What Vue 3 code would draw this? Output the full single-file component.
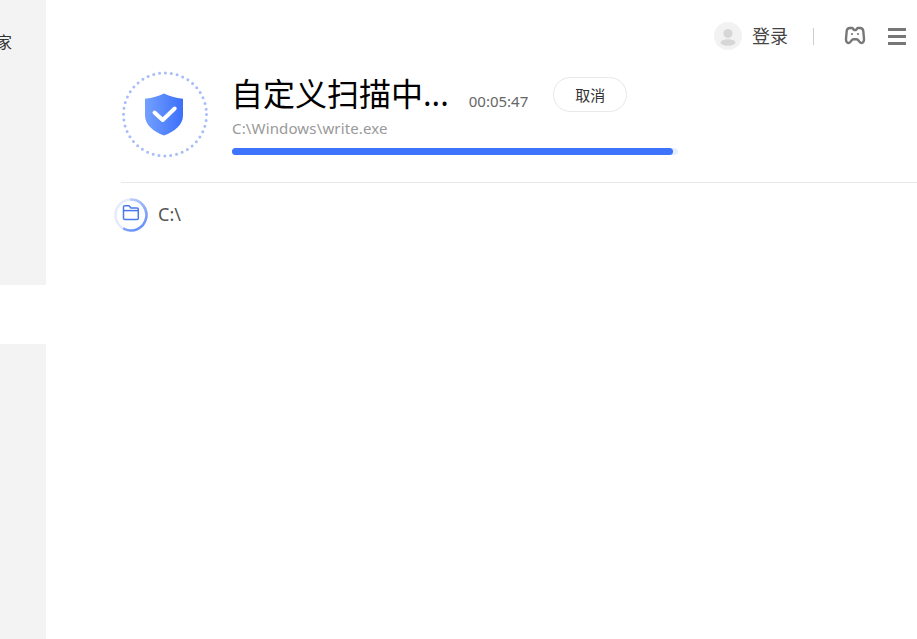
<script setup>
const title = '自定义扫描中...'
const elapsed = '00:05:47'
const currentFile = 'C:\\Windows\\write.exe'
const progress = 98.9
const scanRoot = 'C:\\'
</script>

<template>
  <div class="page">
    <aside class="sidebar">
      <div class="nav-label">家</div>
      <div class="nav-active"></div>
    </aside>

    <main class="main">
      <header class="topbar">
        <span class="avatar">
          <svg width="28" height="28" viewBox="0 0 28 28">
            <circle cx="14" cy="11.500" r="4.500" fill="#d6d6d6" />
            <ellipse cx="14" cy="20.500" rx="7.500" ry="3.200" fill="#d6d6d6" />
          </svg>
        </span>
        <span class="login">登录</span>
        <span class="divider"></span>
        <svg class="game" width="22" height="20" viewBox="0 0 22 20" fill="none">
          <path d="M6 2H8.500L10 4H12L13.500 2H16C18 2 19 3 19.300 5L20 13C20.200 15.500 19 17 17.500 17C16 17 15.500 16 14.500 14.500C14 13.700 13.500 13.200 12.500 13.200H9.500C8.500 13.200 8 13.700 7.500 14.500C6.500 16 6 17 4.500 17C3 17 1.800 15.500 2 13L2.700 5C3 3 4 2 6 2Z" stroke="#777" stroke-width="2.400" stroke-linejoin="round" />
          <circle cx="8" cy="8" r="1.100" fill="#777" />
          <circle cx="14" cy="8" r="1.100" fill="#777" />
        </svg>
        <span class="menu"><i></i><i></i><i></i></span>
      </header>

      <section class="scan">
        <svg class="badge" width="88" height="88" viewBox="0 0 88 88" fill="none">
          <defs>
            <linearGradient id="shieldFill" x1="0" y1="0" x2="1" y2="0">
              <stop offset="0" stop-color="#73a0ff" />
              <stop offset="1" stop-color="#3c6ffb" />
            </linearGradient>
          </defs>
          <circle cx="44" cy="43.500" r="41.500" stroke="#a6bdf8" stroke-width="3" stroke-linecap="round" stroke-dasharray="0 5.930" />
          <path d="M43 22.500c5 2.600 11.500 4.300 19 5.300v16.700c0 9.500-8.500 16-19 20-10.500-4-19-10.500-19-20V27.800c7.500-1 14-2.700 19-5.300Z" fill="url(#shieldFill)" />
          <path d="M33.500 41.500l8.200 7.500 12-11.500" stroke="#fff" stroke-width="4" stroke-linecap="round" stroke-linejoin="round" />
        </svg>

        <div class="scan-info">
          <div class="scan-head">
            <h1 class="title">{{ title }}</h1>
            <span class="time">{{ elapsed }}</span>
            <button class="cancel">取消</button>
          </div>
          <div class="path">{{ currentFile }}</div>
          <div class="track">
            <div class="fill" :style="{ width: progress + '%' }"></div>
          </div>
        </div>
      </section>

      <div class="rule"></div>

      <div class="scan-item">
        <svg class="spinner" width="36" height="36" viewBox="0 0 36 36" fill="none">
          <defs>
            <linearGradient id="ringFill" gradientUnits="userSpaceOnUse" x1="8" y1="4" x2="28" y2="30">
              <stop offset="0" stop-color="#c6d6fc" />
              <stop offset="1" stop-color="#6a92f8" />
            </linearGradient>
          </defs>
          <circle cx="18" cy="18" r="15.500" stroke="#e3ebfd" stroke-width="2.500" />
          <path d="M18 2.500A15.500 15.500 0 1 1 11.100 31.900" stroke="url(#ringFill)" stroke-width="2.500" stroke-linecap="round" />
          <path d="M10.500 10c0-.8.600-1.300 1.400-1.300h4.200l1.800 2.300h6.100c.8 0 1.300.6 1.300 1.300v9c0 .8-.5 1.300-1.300 1.300h-12.100c-.8 0-1.400-.5-1.400-1.300Z" stroke="#4a78ee" stroke-width="1.500" stroke-linejoin="round" />
          <path d="M10.500 13.600h15.300" stroke="#4a78ee" stroke-width="1.500" />
        </svg>
        <span class="item-name">{{ scanRoot }}</span>
      </div>
    </main>
  </div>
</template>

<style>
html, body {
  margin: 0;
  background: #fff;
}
</style>

<style scoped>
.page {
  display: flex;
  width: 917px;
  height: 639px;
  overflow: hidden;
  background: #fff;
  font-family: "Noto Sans", "Noto Sans CJK SC", sans-serif;
}

.sidebar {
  flex: 0 0 46px;
  display: flex;
  flex-direction: column;
  background: #f3f3f3;
}

.nav-label {
  margin: 30px 0 0 -4px;
  height: 24px;
  line-height: 24px;
  font-size: 16px;
  color: #333;
}

.nav-active {
  margin-top: 231px;
  height: 59px;
  background: #fff;
}

.main {
  flex: 1;
  min-width: 0;
}

.topbar {
  display: flex;
  align-items: center;
  justify-content: flex-end;
  height: 28px;
  padding: 22px 11px 0 0;
}

.avatar {
  width: 28px;
  height: 28px;
  border-radius: 50%;
  background: #f2f2f2;
}

.avatar svg,
.badge,
.spinner {
  display: block;
}

.login {
  margin: -2px 0 0 10px;
  font-size: 18px;
  color: #444;
}

.divider {
  width: 1px;
  height: 17px;
  margin: 0 30px 0 25px;
  background: #ccc;
}

.game {
  flex: none;
}

.menu {
  display: flex;
  flex-direction: column;
  gap: 4px;
  width: 18px;
  margin-left: 22px;
}

.menu i {
  height: 3px;
  background: #777;
}

.scan {
  display: flex;
  padding: 21px 0 0 75px;
}

.scan-info {
  margin-left: 23px;
}

.scan-head {
  display: flex;
  align-items: flex-start;
}

.title {
  margin: 0 0 0 -1px;
  font-size: 32px;
  font-weight: 400;
  line-height: 46px;
  color: #000;
}

.time {
  margin: 19px 0 0 20px;
  font-size: 15px;
  line-height: 22px;
  color: #666;
}

.cancel {
  width: 74px;
  height: 35px;
  margin: 6px 0 0 25px;
  padding: 0;
  border: 1px solid #e8e8e8;
  border-radius: 18px;
  background: #fff;
  font: inherit;
  font-size: 15px;
  color: #333;
}

.path {
  margin-top: 1px;
  font-size: 15px;
  letter-spacing: 0.15px;
  line-height: 20px;
  color: #999;
}

.track {
  width: 446px;
  height: 7px;
  margin-top: 10px;
  border-radius: 4px;
  background: #e8effe;
}

.fill {
  height: 100%;
  border-radius: 4px;
  background: #3e73fb;
}

.rule {
  height: 1px;
  margin: 23px 0 0 75px;
  background: #e8e8e8;
}

.scan-item {
  display: flex;
  align-items: center;
  padding: 14px 0 0 67px;
}

.item-name {
  margin: -3px 0 0 9px;
  font-size: 18px;
  color: #555;
}
</style>
